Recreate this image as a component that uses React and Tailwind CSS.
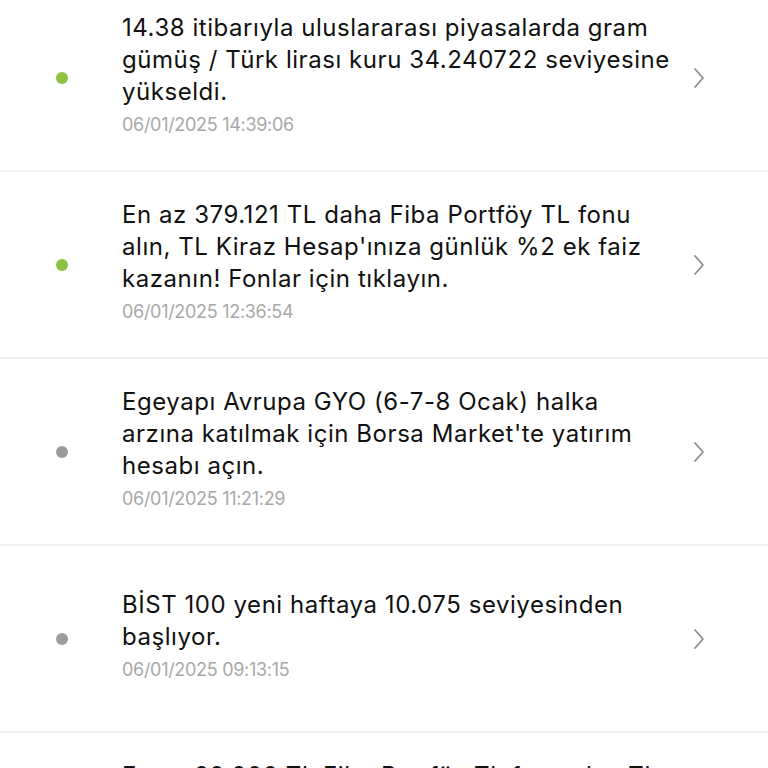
import React from "react";

const items = [
  {
    unread: true,
    lines: [
      "14.38 itibarıyla uluslararası piyasalarda gram",
      "gümüş / Türk lirası kuru 34.240722 seviyesine",
      "yükseldi.",
    ],
    date: "06/01/2025 14:39:06",
  },
  {
    unread: true,
    lines: [
      "En az 379.121 TL daha Fiba Portföy TL fonu",
      "alın, TL Kiraz Hesap'ınıza günlük %2 ek faiz",
      "kazanın! Fonlar için tıklayın.",
    ],
    date: "06/01/2025 12:36:54",
  },
  {
    unread: false,
    lines: [
      "Egeyapı Avrupa GYO (6-7-8 Ocak) halka",
      "arzına katılmak için Borsa Market'te yatırım",
      "hesabı açın.",
    ],
    date: "06/01/2025 11:21:29",
  },
  {
    unread: false,
    lines: ["BİST 100 yeni haftaya 10.075 seviyesinden", "başlıyor."],
    date: "06/01/2025 09:13:15",
  },
  {
    unread: true,
    lines: [
      "En az 20.000 TL Fiba Portföy TL fonu alın, TL",
      "Kiraz Hesap'ınıza günlük %2 ek faiz kazanın!",
      "Fonlar için tıklayın.",
    ],
    date: "06/01/2025 08:30:00",
  },
];

function Chevron() {
  return (
    <svg width="12" height="22" viewBox="0 0 12 22" fill="none">
      <polyline
        points="2,2 10,11 2,20"
        stroke="#8e8e8e"
        strokeWidth="1.8"
        strokeLinecap="round"
        strokeLinejoin="round"
      />
    </svg>
  );
}

function Row({ item }) {
  return (
    <div className="flex items-center h-[187px] border-b-2 border-[#f1f1f1]">
      <div className="w-[122px] flex justify-center pl-[2px] shrink-0">
        <span
          className={
            item.unread
              ? "block w-3 h-3 rounded-full bg-[#8cc23f]"
              : "block w-3 h-3 rounded-full bg-[#9b9b9b]"
          }
        />
      </div>
      <div className="flex-1 flex flex-col mb-[8px]">
        <div className="text-[24px] leading-[32px] tracking-[0.55px] text-[#111111]">
          {item.lines.map((l, i) => (
            <span key={i} className="block whitespace-nowrap">
              {l}
            </span>
          ))}
        </div>
        <div className="mt-[6px] text-[18px] leading-[22px] tracking-[-0.3px] text-[#a8a8a8]">
          {item.date}
        </div>
      </div>
      <div className="w-[81px] flex justify-start pl-[6px] shrink-0">
        <Chevron />
      </div>
    </div>
  );
}

export default function App() {
  return (
    <div
      className="w-[768px] h-[768px] overflow-hidden bg-white"
      style={{ fontFamily: "Inter, 'Noto Sans', sans-serif" }}
    >
      <div className="-mt-[15px]">
        {items.map((it, i) => (
          <Row key={i} item={it} />
        ))}
      </div>
    </div>
  );
}
